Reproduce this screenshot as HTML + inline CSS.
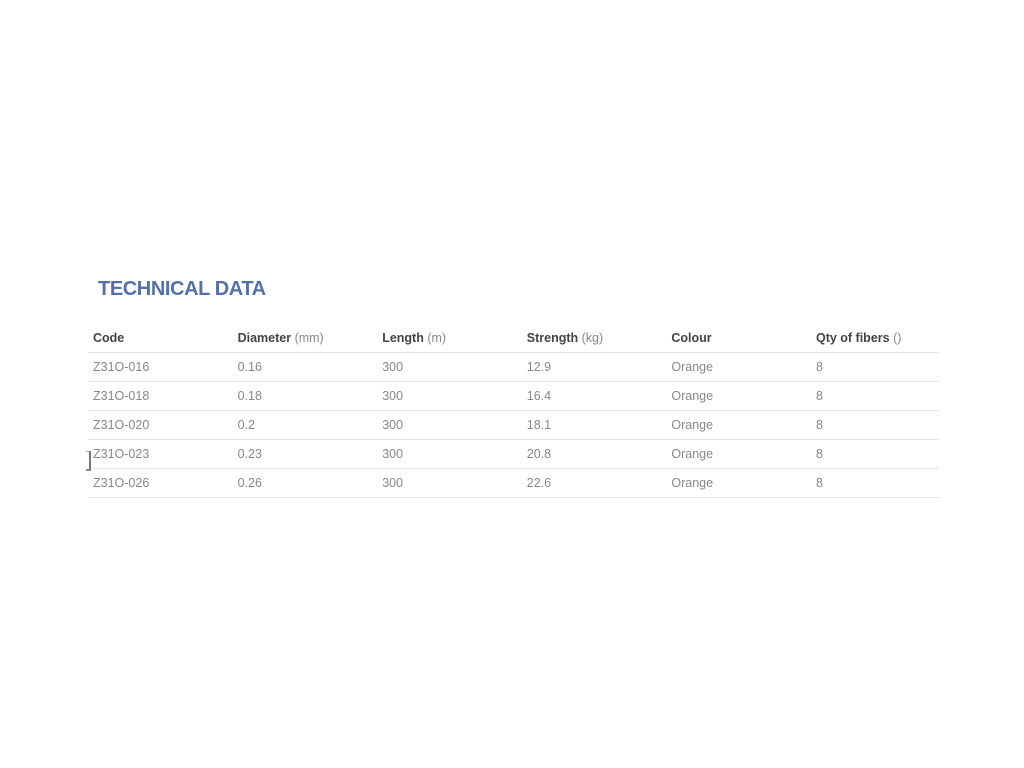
<!DOCTYPE html>
<html><head><meta charset="utf-8"><style>
body{margin:0;width:1024px;height:768px;background:#fff;font-family:"Liberation Sans",sans-serif;position:relative;overflow:hidden}
h2{position:absolute;left:98px;top:278px;margin:0;font-size:20px;font-weight:bold;color:#5470ac;letter-spacing:-0.4px}
table{position:absolute;left:88px;top:323px;width:851px;border-collapse:collapse;font-size:12.5px;table-layout:fixed}
td,th{height:28px;padding:0 0 0 5px;text-align:left;border-bottom:1px solid #e2e2e2;color:#888;font-weight:normal;vertical-align:middle;white-space:nowrap}
th b{color:#444}
tr:first-child th{height:29px}
.br{position:absolute;left:86px;top:451px;width:3px;height:17px;border-right:2px solid #777;border-top:1px solid #aaa;border-bottom:2px solid #888}
</style></head><body>
<h2>TECHNICAL DATA</h2>
<table>
<colgroup><col style="width:144.6px"><col style="width:144.6px"><col style="width:144.6px"><col style="width:144.6px"><col style="width:144.6px"><col></colgroup>
<tr><th><b>Code</b></th><th><b>Diameter</b> (mm)</th><th><b>Length</b> (m)</th><th><b>Strength</b> (kg)</th><th><b>Colour</b></th><th><b>Qty of fibers</b> ()</th></tr>
<tr><td>Z31O-016</td><td>0.16</td><td>300</td><td>12.9</td><td>Orange</td><td>8</td></tr>
<tr><td>Z31O-018</td><td>0.18</td><td>300</td><td>16.4</td><td>Orange</td><td>8</td></tr>
<tr><td>Z31O-020</td><td>0.2</td><td>300</td><td>18.1</td><td>Orange</td><td>8</td></tr>
<tr><td>Z31O-023</td><td>0.23</td><td>300</td><td>20.8</td><td>Orange</td><td>8</td></tr>
<tr><td>Z31O-026</td><td>0.26</td><td>300</td><td>22.6</td><td>Orange</td><td>8</td></tr>
</table>
<div class="br"></div>
</body></html>
